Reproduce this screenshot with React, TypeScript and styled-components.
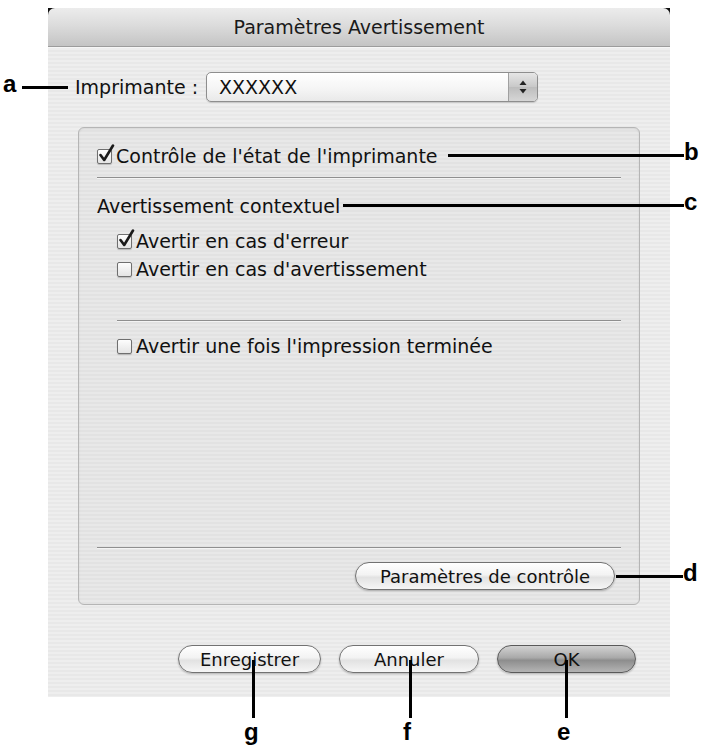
import styled, { createGlobalStyle } from "styled-components";

const GlobalStyle = createGlobalStyle`
  html, body {
    margin: 0;
    padding: 0;
    background: #ffffff;
  }
  body {
    font-family: "DejaVu Sans", "Liberation Sans", sans-serif;
    color: #111;
  }
`;

const Page = styled.div`
  position: relative;
  width: 703px;
  height: 751px;
  overflow: hidden;
  background: #fff;
  padding-top: 8px;
  box-sizing: border-box;
`;

const Window = styled.div`
  position: relative;
  margin-left: 48px;
  width: 622px;
  height: 689px;
  display: flex;
  flex-direction: column;
  background: repeating-linear-gradient(
    to bottom,
    #eeeeee 0px,
    #eeeeee 2px,
    #e8e8e8 2px,
    #e8e8e8 4px
  );

  /* dark bits behind the rounded title corners */
  &::before,
  &::after {
    content: "";
    position: absolute;
    top: 0;
    width: 7px;
    height: 7px;
    background: #111;
  }
  &::before { left: 0; }
  &::after { right: 0; }
`;

const TitleBar = styled.div`
  position: relative;
  z-index: 1;
  height: 38px;
  display: flex;
  align-items: center;
  justify-content: center;
  border-radius: 7px 7px 0 0;
  background: linear-gradient(to bottom, #ececec 0%, #dcdcdc 45%, #c4c4c4 100%);
  border-bottom: 1px solid #9c9c9c;
  box-shadow: 0 1px 0 #f6f6f6;
  font-size: 19px;
  color: #1a1a1a;
`;

const Body = styled.div`
  flex: 1;
  display: flex;
  flex-direction: column;
  padding: 25px 30px 0 30px;
`;

const PrinterRow = styled.div`
  display: flex;
  align-items: center;
  gap: 8px;
  margin-left: -3px;
  font-size: 19px;
`;

const Select = styled.div`
  width: 332px;
  height: 30px;
  box-sizing: border-box;
  display: flex;
  border: 1px solid #8e8e8e;
  border-radius: 5px;
  background: linear-gradient(to bottom, #ffffff 0%, #f4f4f4 60%, #e9e9e9 100%);
  box-shadow: 0 1px 1px rgba(0, 0, 0, 0.15);
  overflow: hidden;
`;

const SelectValue = styled.div`
  flex: 1;
  display: flex;
  align-items: center;
  padding-left: 12px;
  font-size: 19px;
`;

const Stepper = styled.div`
  width: 28px;
  border-left: 1px solid #a0a0a0;
  background: linear-gradient(to bottom, #e6e6e6 0%, #c8c8c8 50%, #bdbdbd 51%, #d6d6d6 100%);
  display: flex;
  align-items: center;
  justify-content: center;
`;

const GroupBox = styled.div`
  margin-top: 25px;
  height: 478px;
  box-sizing: border-box;
  border: 1px solid #b5b5b5;
  border-radius: 6px;
  background: rgba(0, 0, 0, 0.025);
  box-shadow: inset 0 1px 2px rgba(0, 0, 0, 0.08);
  padding: 14px 18px 14px 18px;
  display: flex;
  flex-direction: column;
`;

const CheckRow = styled.label<{ $indent?: boolean; $gapTop?: number }>`
  display: flex;
  align-items: center;
  gap: 4px;
  height: 28px;
  font-size: 19px;
  margin-left: ${(p) => (p.$indent ? "20px" : "0")};
  margin-top: ${(p) => p.$gapTop ?? 0}px;
`;

const Box = styled.span`
  position: relative;
  width: 15px;
  height: 15px;
  box-sizing: border-box;
  border: 1px solid #6f6f6f;
  border-radius: 2px;
  background: linear-gradient(to bottom, #fdfdfd 0%, #e4e4e4 100%);
  box-shadow: 0 1px 1px rgba(0, 0, 0, 0.2);
  flex-shrink: 0;

  svg {
    position: absolute;
    left: 0px;
    top: -6px;
  }
`;

const Separator = styled.div<{ $indent?: boolean; $top: number; $bottom: number }>`
  height: 1px;
  background: #8f8f8f;
  box-shadow: 0 1px 0 #f4f4f4;
  margin: ${(p) => p.$top}px 0 ${(p) => p.$bottom}px ${(p) => (p.$indent ? "20px" : "0")};
`;

const SectionLabel = styled.div`
  font-size: 19px;
  height: 28px;
  display: flex;
  align-items: center;
`;

const Spacer = styled.div`
  flex: 1;
`;

const Button = styled.button<{ $default?: boolean; $width: number }>`
  width: ${(p) => p.$width}px;
  height: 28px;
  border-radius: 14px;
  border: 1px solid ${(p) => (p.$default ? "#5a5a5a" : "#727272")};
  font-family: "DejaVu Sans", sans-serif;
  font-size: 18px;
  color: #111;
  padding: 0;
  background: ${(p) =>
    p.$default
      ? "linear-gradient(to bottom, #d2d2d2 0%, #a9a9a9 45%, #8d8d8d 55%, #b4b4b4 100%)"
      : "linear-gradient(to bottom, #ffffff 0%, #f3f3f3 45%, #e2e2e2 55%, #f6f6f6 100%)"};
  box-shadow: 0 1px 2px rgba(0, 0, 0, 0.25);
`;

const RightRow = styled.div`
  display: flex;
  justify-content: flex-end;
  margin-top: 14px;
  padding-right: 6px;
`;

const Footer = styled.div`
  display: flex;
  justify-content: flex-end;
  gap: 18px;
  margin-top: 40px;
  padding-right: 4px;
`;

/* annotation layer */
const Letter = styled.div<{ $x: number; $y: number }>`
  position: absolute;
  left: ${(p) => p.$x}px;
  top: ${(p) => p.$y}px;
  font-family: "Liberation Sans", Arial, sans-serif;
  font-weight: bold;
  font-size: 24px;
  line-height: 24px;
  color: #000;
`;

const HLine = styled.div<{ $x: number; $y: number; $w: number }>`
  position: absolute;
  left: ${(p) => p.$x}px;
  top: ${(p) => p.$y}px;
  width: ${(p) => p.$w}px;
  height: 3px;
  background: #000;
`;

const VLine = styled.div<{ $x: number; $y: number; $h: number }>`
  position: absolute;
  left: ${(p) => p.$x}px;
  top: ${(p) => p.$y}px;
  width: 3px;
  height: ${(p) => p.$h}px;
  background: #000;
`;

const Check = () => (
  <svg width="17" height="20" viewBox="0 0 17 20">
    <path d="M2.5 11 L6.2 16 L15 1.5" fill="none" stroke="#1a1a1a" strokeWidth="2.6" strokeLinecap="round" strokeLinejoin="round" />
  </svg>
);

const CheckBox = ({ checked }: { checked?: boolean }) => <Box>{checked && <Check />}</Box>;

const Arrows = () => (
  <svg width="10" height="16" viewBox="0 0 10 16">
    <path d="M5 1.5 L8.5 6 L1.5 6 Z" fill="#222" />
    <path d="M5 14.5 L8.5 10 L1.5 10 Z" fill="#222" />
  </svg>
);

export default function App() {
  return (
    <>
      <GlobalStyle />
      <Page>
        <Window>
          <TitleBar>Paramètres Avertissement</TitleBar>
          <Body>
            <PrinterRow>
              <span>Imprimante :</span>
              <Select>
                <SelectValue>XXXXXX</SelectValue>
                <Stepper>
                  <Arrows />
                </Stepper>
              </Select>
            </PrinterRow>

            <GroupBox>
              <CheckRow>
                <CheckBox checked />
                Contrôle de l'état de l'imprimante
              </CheckRow>
              <Separator $top={7} $bottom={14} />
              <SectionLabel>Avertissement contextuel</SectionLabel>
              <CheckRow $indent $gapTop={7}>
                <CheckBox checked />
                Avertir en cas d'erreur
              </CheckRow>
              <CheckRow $indent>
                <CheckBox />
                Avertir en cas d'avertissement
              </CheckRow>
              <Separator $indent $top={37} $bottom={11} />
              <CheckRow $indent>
                <CheckBox />
                Avertir une fois l'impression terminée
              </CheckRow>
              <Spacer />
              <Separator $top={0} $bottom={0} />
              <RightRow>
                <Button $width={260}>Paramètres de contrôle</Button>
              </RightRow>
            </GroupBox>

            <Footer>
              <Button $width={143}>Enregistrer</Button>
              <Button $width={140}>Annuler</Button>
              <Button $width={139} $default>
                OK
              </Button>
            </Footer>
          </Body>
        </Window>

        <Letter $x={3} $y={72}>a</Letter>
        <HLine $x={22} $y={86} $w={46} />

        <HLine $x={448} $y={154} $w={236} />
        <Letter $x={684} $y={140}>b</Letter>

        <HLine $x={343} $y={204} $w={341} />
        <Letter $x={684} $y={190}>c</Letter>

        <HLine $x={616} $y={575} $w={67} />
        <Letter $x={683} $y={561}>d</Letter>

        <VLine $x={252} $y={660} $h={58} />
        <Letter $x={244} $y={720}>g</Letter>

        <VLine $x={409} $y={660} $h={58} />
        <Letter $x={403} $y={720}>f</Letter>

        <VLine $x={565} $y={660} $h={58} />
        <Letter $x={557} $y={720}>e</Letter>
      </Page>
    </>
  );
}
